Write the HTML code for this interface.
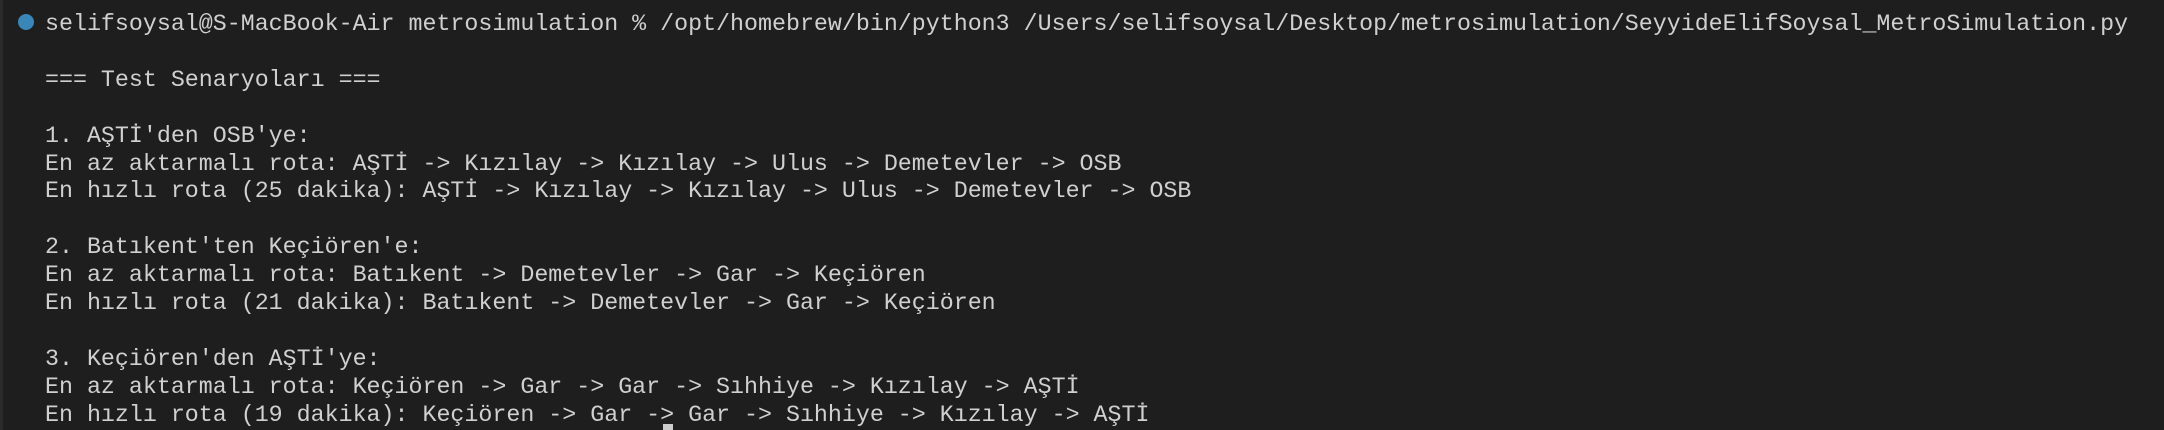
<!DOCTYPE html>
<html><head><meta charset="utf-8"><style>
html,body{margin:0;padding:0;}
body{width:2164px;height:430px;background:#1e1e1e;overflow:hidden;position:relative;}
.edge{position:absolute;left:0;top:0;width:3px;height:430px;background:#2b2b2b;}
.dot{position:absolute;left:18px;top:14px;width:16px;height:16px;border-radius:50%;background:#3a86b8;}
pre{position:absolute;left:45px;top:11px;margin:0;font-family:"Liberation Mono",monospace;font-size:23.3px;line-height:27.9px;color:#d0d0d0;white-space:pre;}
.cur{position:absolute;left:663px;top:424px;width:10px;height:6px;background:#cccccc;}
</style></head><body>
<div class="edge"></div><div class="dot"></div>
<pre>selifsoysal@S-MacBook-Air metrosimulation % /opt/homebrew/bin/python3 /Users/selifsoysal/Desktop/metrosimulation/SeyyideElifSoysal_MetroSimulation.py

=== Test Senaryoları ===

1. AŞTİ'den OSB'ye:
En az aktarmalı rota: AŞTİ -> Kızılay -> Kızılay -> Ulus -> Demetevler -> OSB
En hızlı rota (25 dakika): AŞTİ -> Kızılay -> Kızılay -> Ulus -> Demetevler -> OSB

2. Batıkent'ten Keçiören'e:
En az aktarmalı rota: Batıkent -> Demetevler -> Gar -> Keçiören
En hızlı rota (21 dakika): Batıkent -> Demetevler -> Gar -> Keçiören

3. Keçiören'den AŞTİ'ye:
En az aktarmalı rota: Keçiören -> Gar -> Gar -> Sıhhiye -> Kızılay -> AŞTİ
En hızlı rota (19 dakika): Keçiören -> Gar -> Gar -> Sıhhiye -> Kızılay -> AŞTİ</pre>
<div class="cur"></div>
</body></html>
